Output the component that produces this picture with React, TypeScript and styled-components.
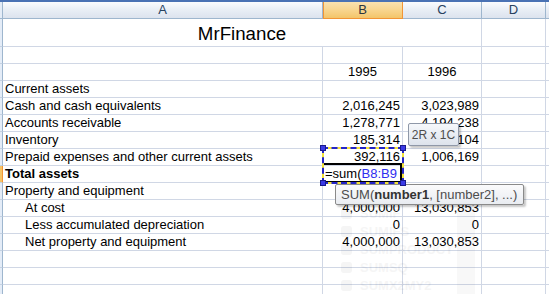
import * as React from 'react';
import styled, { createGlobalStyle, css } from 'styled-components';

const GlobalStyle = createGlobalStyle`
  html, body {
    margin: 0;
    padding: 0;
    background: #fff;
    overflow: hidden;
  }
  body {
    font-family: "Liberation Sans", Arial, sans-serif;
  }
`;

const GRID = '#d0d7e5';
const HEAD_LINE = '#9eb6ce';

const Page = styled.div`
  position: relative;
  width: 549px;
  height: 294px;
  overflow: hidden;
`;

const TopBar = styled.div`
  height: 2px;
  background: #4a72b4;
`;

const Sheet = styled.div`
  display: grid;
  grid-template-columns: 3px 320px 80px 79px 64px 1fr;
  grid-template-rows: 17px 28px;
  grid-auto-rows: 17px;
  font-size: 13px;
  color: #000;
`;

const Corner = styled.div`
  background: #e4ecf7;
  border-right: 1px solid ${HEAD_LINE};
  border-bottom: 1px solid ${HEAD_LINE};
`;

const ColHeader = styled.div<{ $selected?: boolean }>`
  line-height: 16px;
  text-align: center;
  color: #27415f;
  background: linear-gradient(#fbfcfe 0%, #eaeff6 45%, #dce3ee 100%);
  border-right: 1px solid ${HEAD_LINE};
  border-bottom: 1px solid ${HEAD_LINE};
  ${({ $selected }) =>
    $selected &&
    css`
      color: #2a3540;
      background: linear-gradient(#fae2b0 0%, #f8d58f 50%, #f3c56a 100%);
      border-right-color: #f29536;
      border-bottom-color: #f29536;
      box-shadow: inset 1px 0 0 #f29536;
    `}
`;

const RowHeader = styled.div<{ $selected?: boolean }>`
  background: ${({ $selected }) => ($selected ? '#f6c466' : '#e4ecf7')};
  border-right: 1px solid ${({ $selected }) => ($selected ? '#f29536' : HEAD_LINE)};
  border-bottom: 1px solid #c5d2e2;
`;

const Cell = styled.div<{ $align?: 'left' | 'right' | 'center'; $bold?: boolean; $indent?: boolean }>`
  line-height: 16px;
  padding: 0 2px 0 ${({ $indent }) => ($indent ? '22px' : '2px')};
  text-align: ${({ $align }) => $align || 'left'};
  font-weight: ${({ $bold }) => ($bold ? 'bold' : 'normal')};
  white-space: nowrap;
  border-right: 1px solid ${GRID};
  border-bottom: 1px solid ${GRID};
`;

const TitleCell = styled.div`
  grid-column: span 3;
  display: flex;
  align-items: flex-end;
  justify-content: center;
  padding-bottom: 2px;
  box-sizing: border-box;
  font-size: 18.7px;
  line-height: 21px;
  border-right: 1px solid ${GRID};
  border-bottom: 1px solid ${GRID};
`;

const RefText = styled.span`
  color: #2e2ef0;
`;

const ActiveCell = styled.div`
  position: absolute;
  left: 322px;
  top: 163px;
  width: 80px;
  height: 20px;
  box-sizing: border-box;
  border: 2px solid #000;
`;

const RangeBox = styled.div`
  position: absolute;
  left: 322px;
  top: 147px;
  width: 82px;
  height: 37px;
  box-sizing: border-box;
  border: 2px solid #f3e23a;
  &::after {
    content: '';
    position: absolute;
    inset: -2px;
    border: 2px dashed #2424c8;
  }
`;

const Handle = styled.div<{ $x: 'l' | 'r'; $y: 't' | 'b' }>`
  position: absolute;
  width: 4px;
  height: 4px;
  background: #3a3ae6;
  border: 1px solid #1a1a8a;
  z-index: 1;
  ${({ $x }) => ($x === 'l' ? 'left: -4px;' : 'right: -4px;')}
  ${({ $y }) => ($y === 't' ? 'top: -4px;' : 'bottom: -4px;')}
`;

const Tip = styled.div`
  position: absolute;
  display: flex;
  align-items: center;
  box-sizing: border-box;
  color: #4d4d4d;
  white-space: nowrap;
  border: 1px solid #8f98a8;
  border-radius: 2px;
  box-shadow: 2px 2px 2px rgba(0, 0, 0, 0.22);
`;

const SizeTip = styled(Tip)`
  left: 408px;
  top: 123px;
  width: 51px;
  height: 23px;
  justify-content: center;
  font-size: 12px;
  background: linear-gradient(#f6f8fb, #dde3ec);
`;

const FuncTip = styled(Tip)`
  left: 335px;
  top: 184px;
  width: 189px;
  height: 21px;
  padding-left: 5px;
  font-size: 13px;
  background: linear-gradient(#fbfbfc, #e9ecf1);
  border-color: #8a8a8a;
  b {
    color: #333;
  }
`;

/* the autocomplete list, caught while it fades out */
const GhostList = styled.div`
  position: absolute;
  left: 335px;
  top: 203px;
  width: 140px;
  height: 100px;
  opacity: 0.035;
  display: flex;
  pointer-events: none;
`;

const GhostItems = styled.div`
  flex: 1;
  display: flex;
  flex-direction: column;
  gap: 6px;
  padding: 4px 0 0 6px;
`;

const GhostItem = styled.div`
  display: flex;
  align-items: center;
  gap: 8px;
  height: 12px;
  font-size: 13px;
  font-weight: bold;
  color: #000;
  &::before {
    content: '';
    width: 11px;
    height: 11px;
    border-radius: 3px;
    background: #000;
  }
`;

const GhostScroll = styled.div`
  width: 18px;
  background: #555;
`;

interface IRow {
  label?: string;
  b?: React.ReactNode;
  c?: string;
  bold?: boolean;
  indent?: boolean;
  center?: boolean;
}

const rows: IRow[] = [
  {},
  { b: '1995', c: '1996', center: true },
  { label: 'Current assets' },
  { label: 'Cash and cash equivalents', b: '2,016,245', c: '3,023,989' },
  { label: 'Accounts receivable', b: '1,278,771', c: '4,194,238' },
  { label: 'Inventory', b: '185,314', c: '1,735,104' },
  { label: 'Prepaid expenses and other current assets', b: '392,116', c: '1,006,169' },
  { label: 'Total assets', bold: true },
  { label: 'Property and equipment' },
  { label: 'At cost', b: '4,000,000', c: '13,030,853', indent: true },
  { label: 'Less accumulated depreciation', b: '0', c: '0', indent: true },
  { label: 'Net property and equipment', b: '4,000,000', c: '13,030,853', indent: true },
  {},
  {},
  {},
];

const ghostNames = ['SUMIF', 'SUMIFS', 'SUMPRODUCT', 'SUMSQ', 'SUMX2MY2'];

export default function App() {
  return (
    <Page>
      <GlobalStyle />
      <TopBar />
      <Sheet>
        <Corner />
        <ColHeader>A</ColHeader>
        <ColHeader $selected>B</ColHeader>
        <ColHeader>C</ColHeader>
        <ColHeader>D</ColHeader>
        <ColHeader />

        <RowHeader />
        <TitleCell>MrFinance</TitleCell>
        <Cell />
        <Cell />

        {rows.map((row, i) => {
          const isTotal = row.label === 'Total assets';
          return (
            <React.Fragment key={i}>
              <RowHeader $selected={isTotal} />
              <Cell $bold={row.bold} $indent={row.indent}>
                {row.label}
              </Cell>
              <Cell $align={isTotal ? 'left' : row.center ? 'center' : 'right'}>
                {isTotal ? (
                  <>
                    =sum(<RefText>B8:B9</RefText>
                  </>
                ) : (
                  row.b
                )}
              </Cell>
              <Cell $align={row.center ? 'center' : 'right'}>{row.c}</Cell>
              <Cell />
              <Cell />
            </React.Fragment>
          );
        })}
      </Sheet>

      <GhostList>
        <GhostItems>
          {ghostNames.map((name) => (
            <GhostItem key={name}>{name}</GhostItem>
          ))}
        </GhostItems>
        <GhostScroll />
      </GhostList>

      <ActiveCell />
      <RangeBox>
        <Handle $x='l' $y='t' />
        <Handle $x='r' $y='t' />
        <Handle $x='l' $y='b' />
        <Handle $x='r' $y='b' />
      </RangeBox>

      <SizeTip>2R x 1C</SizeTip>
      <FuncTip>
        SUM(<b>number1</b>, [number2], ...)
      </FuncTip>
    </Page>
  );
}
